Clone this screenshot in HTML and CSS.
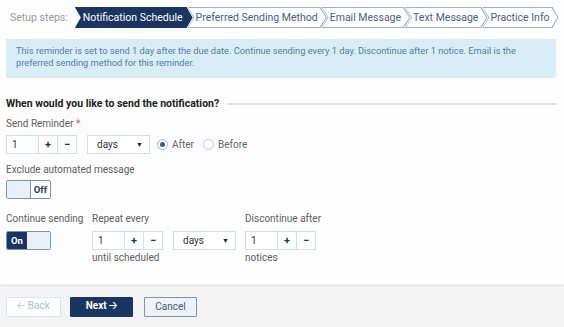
FILE: index.html
```html
<!DOCTYPE html>
<html lang="en">
<head>
  <meta charset="UTF-8">
  <title>Notification Schedule</title>
  <link rel="stylesheet" href="styles.css">
</head>
<body>
  <div class="steps">
    <span class="steps-label">Setup steps:</span>
    <div class="step active"><span>Notification Schedule</span></div>
    <div class="step"><span>Preferred Sending Method</span></div>
    <div class="step"><span>Email Message</span></div>
    <div class="step"><span>Text Message</span></div>
    <div class="step"><span>Practice Info</span></div>
  </div>

  <div class="info-box">
    This reminder is set to send 1 day after the due date. Continue sending every 1 day. Discontinue after 1 notice. Email is the preferred sending method for this reminder.
  </div>

  <div class="section-title">
    <span>When would you like to send the notification?</span>
    <div class="section-line"></div>
  </div>

  <div class="field-label">Send Reminder <span class="req">*</span></div>
  <div class="row">
    <div class="num-group">
      <div class="num-value">1</div>
      <div class="num-btn">+</div>
      <div class="num-btn">&minus;</div>
    </div>
    <div class="select">days <span class="caret">&#9660;</span></div>
    <label class="radio"><span class="radio-dot checked"></span>After</label>
    <label class="radio"><span class="radio-dot"></span>Before</label>
  </div>

  <div class="field-label exclude">Exclude automated message</div>
  <div class="toggle off">
    <div class="toggle-knob"></div>
    <div class="toggle-text">Off</div>
  </div>

  <div class="repeat-row">
    <div class="col col-continue">
      <div class="field-label">Continue sending</div>
      <div class="toggle on">
        <div class="toggle-text">On</div>
        <div class="toggle-knob"></div>
      </div>
    </div>
    <div class="col col-repeat">
      <div class="field-label">Repeat every</div>
      <div class="row">
        <div class="num-group">
          <div class="num-value">1</div>
          <div class="num-btn">+</div>
          <div class="num-btn">&minus;</div>
        </div>
        <div class="select">days <span class="caret">&#9660;</span></div>
      </div>
      <div class="hint">until scheduled</div>
    </div>
    <div class="col">
      <div class="field-label">Discontinue after</div>
      <div class="num-group">
        <div class="num-value">1</div>
        <div class="num-btn">+</div>
        <div class="num-btn">&minus;</div>
      </div>
      <div class="hint">notices</div>
    </div>
  </div>

  <div class="footer">
    <button class="btn btn-back">&#129120; Back</button>
    <button class="btn btn-next">Next <span class="arrow">&#129122;</span></button>
    <button class="btn btn-cancel">Cancel</button>
  </div>
</body>
</html>
```

FILE: styles.css
```css
body {
  margin: 0;
  background: #fdfdfd;
  font-family: Roboto, "Liberation Sans", sans-serif;
  font-size: 10px;
  color: #444;
  width: 564px;
  height: 327px;
  overflow: hidden;
  position: relative;
}

/* setup steps */
.steps {
  display: flex;
  align-items: center;
  padding: 7px 0 0 10px;
  height: 21px;
}

.steps-label {
  color: #9a9a9a;
  font-size: 10.5px;
  margin-right: 7px;
  white-space: nowrap;
}

.step {
  height: 21px;
  background: #9fb0c2;
  clip-path: polygon(0 0, calc(100% - 6px) 0, 100% 50%, calc(100% - 6px) 100%, 0 100%, 6px 50%);
  margin-left: -5px;
  display: flex;
}

.step:first-of-type {
  margin-left: 0;
}

.step span {
  flex: 1;
  margin: 1px;
  background: #fff;
  clip-path: polygon(0 0, calc(100% - 6px) 0, 100% 50%, calc(100% - 6px) 100%, 0 100%, 6px 50%);
  display: flex;
  align-items: center;
  padding: 0 8px 0 7px;
  font-size: 10.5px;
  color: #4a6078;
  white-space: nowrap;
}

.step.active {
  background: #1b3563;
}

.step.active span {
  background: #1b3563;
  color: #fff;
  padding: 0 9px 0 7px;
}

/* info */
.info-box {
  margin: 11px 8px 0 6px;
  background: #d9edf7;
  color: #4d7fa6;
  padding: 6px 10px 9px 10px;
  line-height: 12px;
  font-size: 9.25px;
}

.section-title {
  display: flex;
  align-items: center;
  margin: 19px 7px 0 6px;
  line-height: 14px;
}

.section-title span {
  font-weight: 700;
  font-size: 10.5px;
  color: #222;
  white-space: nowrap;
}

.section-line {
  flex: 1;
  height: 2px;
  background: #e3e3e3;
  margin-left: 8px;
}

.field-label {
  color: #606060;
  line-height: 12px;
  margin: 0 0 0 6px;
}

body > .field-label {
  margin-top: 7px;
}

.req {
  color: #d9534f;
}

.row {
  display: flex;
  align-items: center;
  gap: 10px;
}

body > .row {
  margin: 5px 0 0 6px;
}

.num-group {
  display: flex;
  height: 19px;
  border: 1px solid #d6dde6;
  box-sizing: border-box;
  width: 71px;
  background: #fff;
}

.num-value {
  flex: 1;
  padding-left: 5px;
  line-height: 17px;
  color: #333;
}

.num-btn {
  width: 18px;
  border-left: 1px solid #d6dde6;
  text-align: center;
  line-height: 17px;
  color: #1b3563;
  font-weight: 700;
  font-size: 11px;
}

.select {
  width: 63px;
  height: 19px;
  box-sizing: border-box;
  border: 1px solid #d6dde6;
  background: #fff;
  display: flex;
  align-items: center;
  justify-content: space-between;
  padding: 0 6px 0 9px;
  color: #333;
}

.caret {
  font-size: 7px;
  color: #222;
}

.radio {
  display: flex;
  align-items: center;
  gap: 4px;
  color: #666;
  margin-left: -3px;
}

.radio + .radio {
  margin-left: -1px;
}

.radio-dot {
  width: 9px;
  height: 9px;
  border: 1px solid #c8d0da;
  border-radius: 50%;
  background: #fff;
  display: inline-flex;
  align-items: center;
  justify-content: center;
}

.radio-dot.checked {
  border-color: #b0b8c4;
}

.radio-dot.checked::after {
  content: "";
  width: 5px;
  height: 5px;
  border-radius: 50%;
  background: #3d5a80;
}

.field-label.exclude {
  margin-top: 10px;
}

/* toggles */
.toggle {
  display: flex;
  width: 45px;
  height: 19px;
  box-sizing: border-box;
  border: 1px solid #8093aa;
  border-radius: 2px;
  overflow: hidden;
  margin: 4px 0 0 6px;
}

.toggle-knob {
  width: 23px;
  background: #eaf0f9;
}

.toggle.off .toggle-knob {
  border-right: 1px solid #8093aa;
}

.toggle-text {
  flex: 1;
  display: flex;
  align-items: center;
  justify-content: center;
  font-weight: 700;
  font-size: 9.5px;
}

.toggle.off .toggle-text {
  background: #fff;
  color: #2b3a50;
}

.toggle.on .toggle-text {
  background: #1b3563;
  color: #fff;
}

.repeat-row {
  display: flex;
  margin-top: 14px;
}

.col .field-label {
  margin-left: 0;
}

.col {
  display: flex;
  flex-direction: column;
}

.col .num-group,
.col .row {
  margin-top: 6px;
}

.col .row .num-group {
  margin-top: 0;
}

.col-continue {
  padding-left: 6px;
  width: 80px;
}

.col-continue .toggle {
  margin-left: 0;
  margin-top: 6px;
}

.col-repeat {
  margin-left: 6px;
  width: 153px;
}

.hint {
  color: #606060;
  margin-top: 2px;
}

/* footer */
.footer {
  position: absolute;
  left: 0;
  right: 0;
  bottom: 0;
  height: 42px;
  background: #f4f4f4;
  border-top: 1px solid #e6e6e6;
  box-shadow: 0 -1px 2px rgba(0, 0, 0, 0.05);
  display: flex;
  align-items: center;
  padding-left: 6px;
  gap: 9px;
  box-sizing: border-box;
}

.btn {
  height: 20px;
  font-family: Roboto, "Liberation Sans", sans-serif;
  font-size: 10px;
  border-radius: 1px;
  padding: 0;
}

.btn-back {
  width: 55px;
  background: #fff;
  border: 1px solid #dde4ec;
  color: #b4bcc6;
}

.btn-next {
  width: 63px;
  background: #1b3563;
  border: 1px solid #1b3563;
  color: #fff;
  font-weight: 700;
}

.btn-next .arrow {
  font-size: 10px;
  font-family: "DejaVu Sans", sans-serif;
}

.btn-back {
  font-family: Roboto, "DejaVu Sans", sans-serif;
}

.btn-cancel {
  width: 53px;
  margin-left: 2px;
  background: #eef3fa;
  border: 1px solid #8093aa;
  color: #4a5a6e;
}
```
